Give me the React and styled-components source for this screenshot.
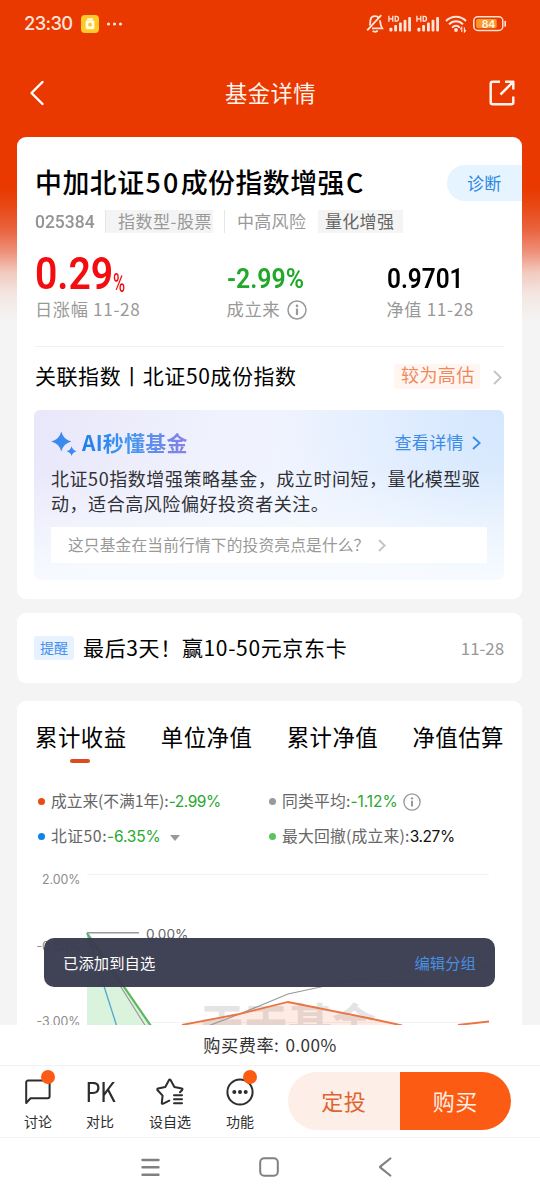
import React from 'react';
import styled, { createGlobalStyle, css } from 'styled-components';

const Global = createGlobalStyle`
  * { box-sizing: border-box; }
  body { margin: 0; background: #f4f4f4; }
  svg { display: block; flex: none; }
`;

const cjk = `'Noto Sans CJK SC', 'Noto Sans', sans-serif`;

const Screen = styled.div`
  position: relative;
  width: 540px;
  height: 1200px;
  overflow: hidden;
  display: flex;
  flex-direction: column;
  font-family: ${cjk};
  color: #000;
  background: #f4f4f4;
`;

const Content = styled.main`
  height: 1025px;
  flex: none;
  overflow: hidden;
  background: linear-gradient(
    #e93900 0, #e93900 188px, #e84a18 208px, #e96440 230px, #ee917a 252px,
    #f2c9be 272px, #f3e6e2 294px, #f4f4f4 322px
  );
`;

/* Text run: size, tracking, weight and colour vary by use */
const Text = styled.span`
  white-space: nowrap;
  line-height: 1.2;
  font-size: ${(p) => p.$size}px;
  letter-spacing: ${(p) => p.$track ?? 0}px;
  font-weight: ${(p) => p.$weight ?? 400};
  color: ${(p) => p.$color ?? '#000'};
`;

const StatusBar = styled.div`
  height: 46px;
  padding: 1px 33px 0 24px;
  display: flex;
  align-items: center;
`;
const StatusIcons = styled.div`
  margin-left: auto;
  display: flex;
  align-items: center;
`;
const Clock = styled(Text)`
  font-family: Inter, sans-serif;
  width: 57px;
`;

const NavBar = styled.header`
  height: 91px;
  padding: 3px 25px 0 29px;
  display: flex;
  align-items: center;
  justify-content: space-between;
`;
const PageTitle = styled(Text)`
  padding: 0 0 2px 7px;
`;

const Card = styled.section`
  width: 505px;
  margin: 0 0 ${(p) => p.$gap ?? 0}px 17px;
  height: ${(p) => p.$h}px;
  padding: 0 18px;
  border-radius: 9px;
  background: #fff;
`;

const TitleRow = styled.div`
  height: 66px;
  padding-top: 28px;
  margin-right: -18px;
  display: flex;
  justify-content: space-between;
`;
const FundName = styled(Text)`
  line-height: 34px;
`;
/* Latin characters and digits set a little wider */
const Latin = styled.span`
  margin-left: 1px;
  letter-spacing: 2.2px;
`;
const Diagnose = styled.button`
  width: 75px;
  height: 36px;
  padding: 0 0 0 20px;
  border: 0;
  border-radius: 18px 0 0 18px;
  background: #e5f4ff;
  font-family: inherit;
  text-align: left;
`;

const TagRow = styled.div`
  height: 24px;
  margin-top: 6px;
  display: flex;
  align-items: center;
`;
const Tag = styled.div`
  width: ${(p) => p.$w}px;
  height: 23px;
  padding-left: ${(p) => p.$pad}px;
  margin-left: ${(p) => p.$ml}px;
  display: flex;
  align-items: center;
  background: ${(p) => (p.$plain ? 'none' : '#f4f4f4')};
  ${(p) => p.$rule && css`border-left: 1px solid #e6e6e6;`}
`;

/* Narrow numerals */
const Figure = styled.span`
  display: inline-block;
  white-space: nowrap;
  font-family: Roboto, 'Liberation Sans', sans-serif;
  font-size: ${(p) => p.$size}px;
  line-height: 1;
  font-weight: ${(p) => p.$weight ?? 600};
  color: ${(p) => p.$color};
  transform: scaleX(${(p) => p.$narrow ?? 0.88});
  transform-origin: 0 50%;
`;
const CodeSlot = styled.div`
  width: 70px;
  display: flex;
`;

const Stats = styled.div`
  height: 114px;
  padding-top: 15px;
  display: grid;
  grid-template-columns: 191.5px 160px 1fr;
  border-bottom: 1px solid #f2f2f2;
`;
const Stat = styled.div`
  display: flex;
  flex-direction: column;
`;
const StatValue = styled.div`
  height: 48px;
  padding-bottom: ${(p) => p.$drop}px;
  display: flex;
  align-items: flex-end;
`;
const BigSlot = styled.div`
  width: 78px;
  display: flex;
`;
const StatLabel = styled.div`
  height: 26px;
  padding-top: 1px;
  display: flex;
  align-items: center;
  gap: 7px;
`;

const IndexRow = styled.div`
  height: 60px;
  padding-right: 2px;
  display: flex;
  align-items: center;
`;
const IndexName = styled(Text)`
  padding-bottom: 3px;
`;
const Valuation = styled.div`
  width: 86px;
  height: 25px;
  margin: 0 0 2px auto;
  padding: 0 0 2px 7px;
  display: flex;
  align-items: center;
  border-radius: 3px;
  background: #fff6f2;
`;
const ArrowSlot = styled.div`
  margin-left: ${(p) => p.$ml}px;
`;

const AiPanel = styled.div`
  width: 470px;
  height: 170px;
  margin: 3px 0 0 -1px;
  padding: 19px 17px 0;
  border-radius: 6px;
  background:
    linear-gradient(180deg, rgba(246,251,255,0) 35%, #f7fbff 100%),
    radial-gradient(circle at 100% 0, #d5e7fe 0, rgba(220,235,255,0) 46%),
    linear-gradient(100deg, #e9e7fa 0, #f0f2fd 38%, #eff5ff 70%, #e6f0ff 100%);
`;
const AiHead = styled.div`
  height: 28px;
  padding: 0 6px 1px 0;
  display: flex;
  align-items: center;
`;
const AiTitle = styled(Text)`
  margin: 0 auto 0 5px;
  background: linear-gradient(90deg, #1f7fe8, #4296f0 45%, #8a80e6);
  background-clip: text;
  color: transparent;
`;
const AiBody = styled.p`
  margin: 9px 0 0;
  font-size: 18px;
  line-height: 24.5px;
  letter-spacing: 0.56px;
  white-space: nowrap;
  color: #303136;
`;
const Question = styled.div`
  width: 436px;
  height: 36px;
  margin-top: 12px;
  padding-left: 17px;
  display: flex;
  align-items: center;
  background: #fff;
`;

const Notice = styled(Card)`
  display: flex;
  align-items: center;
`;
const NoticeTitle = styled(Text)`
  margin-right: auto;
`;
const NoticeBadge = styled.div`
  width: 40px;
  height: 24px;
  margin: 0 9px 0 -1px;
  padding-bottom: 2px;
  display: flex;
  align-items: center;
  justify-content: center;
  border-radius: 3px;
  background: #e8f2ff;
`;

const Tabs = styled.nav`
  height: 66px;
  padding-top: 18px;
  display: flex;
  justify-content: space-between;
`;
const Tab = styled.div`
  display: flex;
  flex-direction: column;
  align-items: center;
`;
const TabLabel = styled(Text)`
  line-height: 34px;
`;
const TabMark = styled.i`
  width: 20px;
  height: 4px;
  margin: 6px 2px 0 0;
  border-radius: 2px;
  background: #dc4c1c;
`;

const Legend = styled.div`
  height: 94px;
  padding-top: 17px;
  display: grid;
  grid-template-columns: 231px 1fr;
  grid-auto-rows: 35px;
`;
const LegendItem = styled.div`
  padding-left: 3px;
  display: flex;
  align-items: center;
  &::before {
    content: '';
    width: 7px;
    height: 7px;
    margin-right: 6px;
    border-radius: 50%;
    background: ${(p) => p.$dot};
  }
`;
const LegendValue = styled(Text)`
  font-family: Inter, sans-serif;
  padding-top: 2px;
`;
const Caret = styled.i`
  margin: 2px 0 0 9px;
  border: 5px solid transparent;
  border-top: 6px solid #999;
  border-bottom: 0;
`;
const Chart = styled.svg`
  margin-left: -18px;
`;

const Toast = styled.div`
  position: absolute;
  left: 44px;
  top: 938px;
  width: 451px;
  height: 49px;
  padding: 0 19px 1px;
  display: flex;
  align-items: center;
  justify-content: space-between;
  border-radius: 10px;
  background: rgba(58, 60, 80, 0.97);
`;

const FeeBar = styled.div`
  height: 41px;
  flex: none;
  padding-top: 1px;
  display: flex;
  justify-content: center;
  align-items: center;
  gap: 6px;
  background: #fff;
  border-bottom: 1px solid #f3f3f3;
`;
const ActionBar = styled.footer`
  height: 72px;
  flex: none;
  padding: 0 29px 0 3px;
  display: flex;
  background: #fff;
  border-bottom: 1px solid #f4f4f4;
`;
const Action = styled.div`
  position: relative;
  width: ${(p) => p.$w}px;
  display: flex;
  flex-direction: column;
  align-items: center;
`;
const ActionIcon = styled.div`
  height: 47px;
  padding-top: 4px;
  display: flex;
  align-items: center;
`;
const Versus = styled(Text)`
  padding-bottom: 2px;
  transform: scaleX(0.92);
`;
const Dot = styled.i`
  position: absolute;
  left: ${(p) => p.$x}px;
  top: 4px;
  width: 14px;
  height: 14px;
  border-radius: 50%;
  background: #fc5b14;
`;
const BuyGroup = styled.div`
  width: 223px;
  height: 58px;
  margin: 6px 0 0 auto;
  display: flex;
  border-radius: 29px;
  overflow: hidden;
`;
const BuyButton = styled.button`
  flex: 1;
  border: 0;
  padding: 0 0 2px;
  font-family: inherit;
  background: ${(p) => (p.$solid ? '#fc5b14' : '#fdeee7')};
`;
const SystemNav = styled.div`
  flex: 1;
  padding: 0 148px 4px 141px;
  display: flex;
  align-items: center;
  justify-content: space-between;
  background: #fff;
`;

const Arrow = ({ color, w = 9, h = 15 }) => (
  <svg width={w} height={h} viewBox={`0 0 ${w} ${h}`} fill="none" stroke={color} strokeWidth="1.9">
    <path d={`M1 1L${w - 1.3} ${h / 2}L1 ${h - 1}`} />
  </svg>
);

const Info = ({ size, color = '#999' }) => (
  <svg width={size} height={size} viewBox="0 0 20 20" fill="none" stroke={color} strokeWidth="1.5">
    <circle cx="10" cy="10" r="9" />
    <path d="M10 8.6V15" strokeWidth="2.2" />
    <circle cx="10" cy="5.9" r="1.3" fill={color} stroke="none" />
  </svg>
);

const Signal = () => (
  <svg width="24" height="18" viewBox="0 0 24 18" fill="#fbe6dc">
    <g stroke="#fbe6dc" strokeWidth="1.3" fill="none">
      <path d="M.9 .8V6.8M4.8 .8V6.8M.9 3.8H4.8M7.2 1.4V6.2H8.4C11.2 6.2 11.2 1.4 8.4 1.4Z" />
    </g>
    <rect x="1.4" y="12.8" width="3" height="3.6" rx="1" />
    <rect x="6.2" y="10" width="2.8" height="6.4" rx="1" />
    <rect x="11" y="7.5" width="2.8" height="8.9" rx="1" />
    <rect x="15.6" y="4.8" width="2.8" height="11.6" rx="1" />
    <rect x="20.2" y="2" width="2.8" height="14.4" rx="1" />
  </svg>
);

export default function App() {
  return (
    <Screen>
      <Global />
      <Content>
        <StatusBar>
          <Clock $size={18.3} $weight={500} $color="#fce3d8" $track={-0.6}>23:30</Clock>
          <svg width="18" height="18" viewBox="0 0 18 18">
            <rect width="18" height="18" rx="4" fill="#ffc928" />
            <rect x="6" y="3.2" width="6" height="1.8" rx=".8" fill="#fffbe5" />
            <rect x="4.6" y="5.3" width="8.8" height="9" rx="1.6" fill="#fffbe5" />
            <circle cx="9" cy="9.7" r="1.9" fill="#ffc928" />
          </svg>
          <svg width="26" height="6" viewBox="0 0 26 6" fill="#fce3d8">
            <circle cx="9.5" cy="3" r="1.6" />
            <circle cx="15.5" cy="3" r="1.6" />
            <circle cx="21.5" cy="3" r="1.6" />
          </svg>
          <StatusIcons>
            <svg width="18" height="19" viewBox="0 0 18 19" fill="none" stroke="#fbe6dc" strokeWidth="1.8">
              <path d="M3.6 11.5C4.4 9.8 4.3 8 4.4 6.4C4.7 3.7 6.5 2.2 9.2 2.2C10.7 2.2 11.7 2.6 12.6 3.5M14 6.3C14.2 9.3 14.3 11.5 16.2 14.3H6" />
              <path d="M15.3 1.2L1.2 16.3M6.7 16.7C7.9 18.2 10.4 18.2 11.7 16.7" />
            </svg>
            <ArrowSlot $ml={4}><Signal /></ArrowSlot>
            <ArrowSlot $ml={4}><Signal /></ArrowSlot>
            <ArrowSlot $ml={5}>
              <svg width="22" height="18" viewBox="0 0 22 18" fill="none" stroke="#fbe6dc" strokeWidth="2">
                <path d="M1 6C6.5 .2 15.5 .2 21 6M4 9.4C8 5.2 14 5.2 18 9.4M7.1 12.6C9.5 10.2 12.5 10.2 14.9 12.6" />
                <circle cx="11" cy="15" r="1.9" fill="#fbe6dc" stroke="none" />
                <path d="M16.8 17V12.5L15.2 14.3M19.4 12.5V17L21 15.2" strokeWidth="1.1" />
              </svg>
            </ArrowSlot>
            <ArrowSlot $ml={6}>
              <svg width="34" height="16" viewBox="0 0 34 16">
                <rect x=".8" y=".8" width="29" height="13.6" rx="4" fill="none" stroke="#fbe3d4" strokeWidth="1.5" />
                <rect x="3.2" y="3" width="20.5" height="9.2" rx="1.6" fill="#f9992b" />
                <path d="M32.2 5.5V10" stroke="#fbe3d4" strokeWidth="1.7" strokeLinecap="round" />
                <text x="15.5" y="11.6" textAnchor="middle" fontFamily="Inter, sans-serif" fontSize="10.5" fontWeight="600" fill="#fff5e8">84</text>
              </svg>
            </ArrowSlot>
          </StatusIcons>
        </StatusBar>

        <NavBar>
          <svg width="16" height="26" viewBox="0 0 16 26" fill="none" stroke="#fff" strokeWidth="2.4" strokeLinecap="round" strokeLinejoin="round">
            <path d="M13.5 2L2.5 13L13.5 24" />
          </svg>
          <PageTitle $size={22.3} $track={0.5} $color="#fff3ec">基金详情</PageTitle>
          <svg width="26" height="26" viewBox="0 0 26 26" fill="none" stroke="#fff3ec" strokeWidth="2.5" strokeLinejoin="round">
            <path d="M11 1.7H3.7Q1.7 1.7 1.7 3.7V22.3Q1.7 24.3 3.7 24.3H22.3Q24.3 24.3 24.3 22.3V16.5" />
            <path d="M16 1.7H24.3V9.5M24.3 1.7L11.5 14.5" />
          </svg>
        </NavBar>

        <Card $h={462} $gap={14}>
          <TitleRow>
            <FundName $size={26.9} $track={0.5} $weight={500}>
              中加北证<Latin>50</Latin>成份指数增强<Latin>C</Latin>
            </FundName>
            <Diagnose><Text $size={17} $track={0.3} $color="#2c87e2">诊断</Text></Diagnose>
          </TitleRow>
          <TagRow>
            <CodeSlot><Figure $size={19} $narrow={0.92} $weight={500} $color="#949494">025384</Figure></CodeSlot>
            <Tag $w={108} $pad={12} $ml={0} $rule><Text $size={17} $track={0.5} $color="#999">指数型-股票</Text></Tag>
            <Tag $w={94} $pad={12} $ml={11} $plain $rule><Text $size={17} $track={0.3} $color="#999">中高风险</Text></Tag>
            <Tag $w={85} $pad={7} $ml={0}><Text $size={17} $track={0.3} $color="#666">量化增强</Text></Tag>
          </TagRow>
          <Stats>
            <Stat>
              <StatValue $drop={0}>
                <BigSlot><Figure $size={45} $narrow={0.87} $color="#f40d10">0.29</Figure></BigSlot>
                <Figure $size={25} $narrow={0.66} $weight={500} $color="#f40d10">%</Figure>
              </StatValue>
              <StatLabel><Text $size={17.2} $track={0.65} $color="#999">日涨幅 11-28</Text></StatLabel>
            </Stat>
            <Stat>
              <StatValue $drop={3}><Figure $size={28.5} $narrow={0.87} $color="#20a828">-2.99%</Figure></StatValue>
              <StatLabel><Text $size={17.4} $track={0.5} $color="#999">成立来</Text><Info size={20} /></StatLabel>
            </Stat>
            <Stat>
              <StatValue $drop={3}><Figure $size={28.5} $narrow={0.855} $color="#000">0.9701</Figure></StatValue>
              <StatLabel><Text $size={17.2} $track={0.65} $color="#999">净值 11-28</Text></StatLabel>
            </Stat>
          </Stats>
          <IndexRow>
            <IndexName $size={21} $track={0.56}>关联指数丨北证50成份指数</IndexName>
            <Valuation><Text $size={18} $track={0.4} $color="#f08a5d">较为高估</Text></Valuation>
            <ArrowSlot $ml={13}><Arrow color="#c4c4c4" /></ArrowSlot>
          </IndexRow>
          <AiPanel>
            <AiHead>
              <svg width="26" height="26" viewBox="0 0 26 26" fill="#3a8af0">
                <path d="M10.3 1.5Q12.3 9.5 20.3 11.5Q12.3 13.5 10.3 21.5Q8.3 13.5 .3 11.5Q8.3 9.5 10.3 1.5Z" />
                <path d="M20.6 16.2Q21.6 20.2 25.6 21.2Q21.6 22.2 20.6 26Q19.6 22.2 15.6 21.2Q19.6 20.2 20.6 16.2Z" />
              </svg>
              <AiTitle $size={21} $weight={700} $track={0.2}>AI秒懂基金</AiTitle>
              <Text $size={17} $track={0.4} $color="#3b8be8">查看详情</Text>
              <ArrowSlot $ml={8}><Arrow color="#3b8be8" w={9} h={14} /></ArrowSlot>
            </AiHead>
            <AiBody>
              北证50指数增强策略基金，成立时间短，量化模型驱<br />
              动，适合高风险偏好投资者关注。
            </AiBody>
            <Question>
              <Text $size={15.7} $track={0.18} $color="#999">这只基金在当前行情下的投资亮点是什么？</Text>
              <ArrowSlot $ml={9}><Arrow color="#c4c4c4" w={8} h={13} /></ArrowSlot>
            </Question>
          </AiPanel>
        </Card>

        <Notice $h={70} $gap={18}>
          <NoticeBadge><Text $size={14} $color="#4490ee">提醒</Text></NoticeBadge>
          <NoticeTitle $size={21} $track={0.65}>最后3天！赢10-50元京东卡</NoticeTitle>
          <Text $size={17} $track={-0.1} $color="#999">11-28</Text>
        </Notice>

        <Card $h={360}>
          <Tabs>
            <Tab><TabLabel $size={22.4} $track={0.5}>累计收益</TabLabel><TabMark /></Tab>
            <Tab><TabLabel $size={22.4} $track={0.5}>单位净值</TabLabel></Tab>
            <Tab><TabLabel $size={22.4} $track={0.5}>累计净值</TabLabel></Tab>
            <Tab><TabLabel $size={22.4} $track={0.5}>净值估算</TabLabel></Tab>
          </Tabs>
          <Legend>
            <LegendItem $dot="#e84c13">
              <Text $size={15.8} $track={-0.1} $color="#666">成立来(不满1年):</Text>
              <LegendValue $size={15.5} $track={-0.45} $color="#27a82e">-2.99%</LegendValue>
            </LegendItem>
            <LegendItem $dot="#999">
              <Text $size={15.8} $track={0.2} $color="#666">同类平均:</Text>
              <LegendValue $size={15.5} $track={-0.1} $color="#27a82e">-1.12%</LegendValue>
              <ArrowSlot $ml={5}><Info size={18} /></ArrowSlot>
            </LegendItem>
            <LegendItem $dot="#0d82e8">
              <Text $size={15.8} $track={0.5} $color="#666">北证50:</Text>
              <LegendValue $size={15.5} $track={-0.15} $color="#27a82e">-6.35%</LegendValue>
              <Caret />
            </LegendItem>
            <LegendItem $dot="#58c45c">
              <Text $size={15.8} $track={0.2} $color="#666">最大回撤(成立来):</Text>
              <LegendValue $size={15.5} $track={-0.4} $color="#111">3.27%</LegendValue>
            </LegendItem>
          </Legend>
          <Chart width="505" height="165" viewBox="17 861 505 165" fill="none">
            <path d="M87 874.5H489M87 946.5H489M87 1022.5H489" stroke="#f3f3f3" />
            <text x="200" y="1041" fontFamily={cjk} fontSize="44" fontWeight="700" fill="#e4e4e4">天天基金</text>
            <path d="M87 933L155 1030H87Z" fill="#daf3dc" />
            <path d="M182 1025L237 1013.5L288 1002L370 1018.5L402 1026H182Z" fill="#fa6a2c" fillOpacity=".13" />
            <path d="M87 933L118 1030" stroke="#52a5cf" strokeWidth="1.3" />
            <path d="M87 933L148 1030M200 1029L237 1015L270 1001.5L288 994L353 980L420 983L489 966.5" stroke="#999" strokeWidth="1.2" />
            <path d="M87 933L153 1029" stroke="#5bb85d" strokeWidth="2.2" />
            <path d="M87 932.8H139" stroke="#999" strokeWidth="1.6" />
            <path d="M182 1025L237 1014.5L288 1002L370 1018.5L402 1025.5M458 1025L489 1021.5" stroke="#ea7444" strokeWidth="1.8" />
            <g fontFamily="Inter, sans-serif" fontSize="12.4" fill="#8c8c8c">
              <text x="80.5" y="884" textAnchor="end">2.00%</text>
              <text x="80.5" y="951" textAnchor="end">-0.50%</text>
              <text x="80.5" y="1026" textAnchor="end">-3.00%</text>
            </g>
            <text x="146" y="939" fontFamily="Inter, sans-serif" fontSize="13.6" fill="#666">0.00%</text>
          </Chart>
        </Card>
      </Content>

      <Toast>
        <Text $size={15.3} $track={0.1} $color="#fff">已添加到自选</Text>
        <Text $size={15.3} $track={0.1} $color="#4a90e2">编辑分组</Text>
      </Toast>

      <FeeBar>
        <Text $size={17.2} $track={0.5} $color="#333">购买费率:</Text>
        <Text $size={17.2} $track={0.4} $color="#333">0.00%</Text>
      </FeeBar>
      <ActionBar>
        <Action $w={70}>
          <ActionIcon>
            <svg width="26" height="26" viewBox="0 0 26 26" fill="none" stroke="#2d2d2d" strokeWidth="2" strokeLinejoin="round">
              <path d="M1.2 24V3.6Q1.2 1.6 3.2 1.6H22.6Q24.6 1.6 24.6 3.6V17.2Q24.6 19.2 22.6 19.2H5.6Z" />
            </svg>
          </ActionIcon>
          <Dot $x={38} />
          <Text $size={14} $color="#2d2d2d">讨论</Text>
        </Action>
        <Action $w={54}>
          <ActionIcon><Versus $size={26.5} $track={-0.8} $color="#2d2d2d">PK</Versus></ActionIcon>
          <Text $size={14} $color="#2d2d2d">对比</Text>
        </Action>
        <Action $w={86}>
          <ActionIcon>
            <svg width="28" height="27" viewBox="0 0 28 27" fill="none" stroke="#2d2d2d" strokeWidth="2" strokeLinecap="round" strokeLinejoin="round">
              <path d="M13.3 22.6L6.7 25.8Q5.6 26 5.8 24.8L6.6 17.6L1.4 12Q.9 10.9 2 10.5L9.3 9L12.9 2.2Q13.8 1 14.7 2.2L18.4 9L25.8 10.5Q27 11 26.2 12L24 14.2" />
              <path d="M18 17.3H26M18 21.3H26M18 25.3H26" />
            </svg>
          </ActionIcon>
          <Text $size={14} $color="#2d2d2d">设自选</Text>
        </Action>
        <Action $w={54}>
          <ActionIcon>
            <svg width="28" height="28" viewBox="0 0 28 28" fill="#2d2d2d">
              <circle cx="14" cy="14" r="12.6" fill="none" stroke="#2d2d2d" strokeWidth="2" />
              <circle cx="8.3" cy="14" r="2" />
              <circle cx="14" cy="14" r="2" />
              <circle cx="19.7" cy="14" r="2" />
            </svg>
          </ActionIcon>
          <Dot $x={30} />
          <Text $size={14} $color="#2d2d2d">功能</Text>
        </Action>
        <BuyGroup>
          <BuyButton><Text $size={22} $track={0.4} $color="#dd6533">定投</Text></BuyButton>
          <BuyButton $solid><Text $size={22} $track={0.4} $color="#fff0e4">购买</Text></BuyButton>
        </BuyGroup>
      </ActionBar>
      <SystemNav>
        <svg width="19" height="19" viewBox="0 0 19 19" stroke="#808080" strokeWidth="2.4" strokeLinecap="round">
          <path d="M1.5 2H17.5M1.5 9.3H17.5M1.5 16.7H17.5" />
        </svg>
        <svg width="20" height="20" viewBox="0 0 20 20" fill="none" stroke="#808080" strokeWidth="2">
          <rect x="1.2" y="1.2" width="17.6" height="17.6" rx="4" />
        </svg>
        <svg width="14" height="20" viewBox="0 0 14 20" fill="none" stroke="#808080" strokeWidth="2.2" strokeLinecap="round" strokeLinejoin="round">
          <path d="M12.3 1.5L2.5 9.3Q1.8 10 2.5 10.7L12.3 18.5" />
        </svg>
      </SystemNav>
    </Screen>
  );
}
